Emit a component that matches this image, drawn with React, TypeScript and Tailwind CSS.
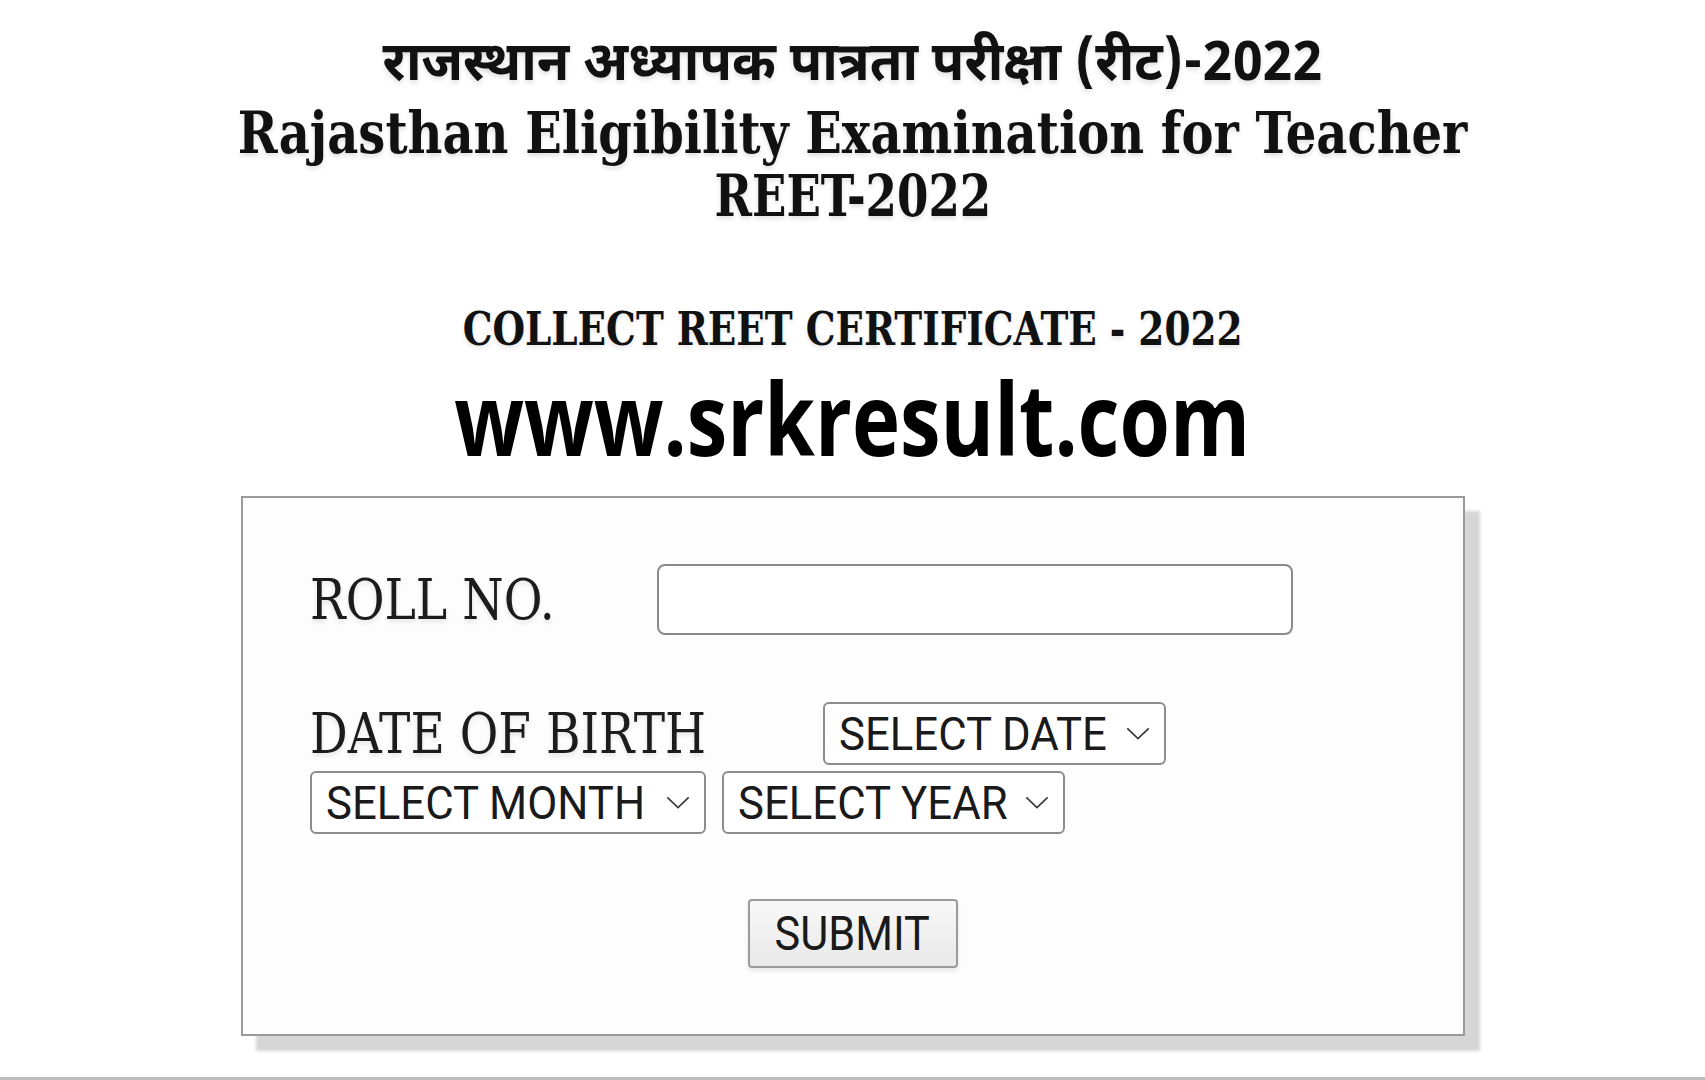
const serif = "font-['DejaVu_Serif','Liberation_Serif',serif]"
const sans = "font-['Roboto','Liberation_Sans',sans-serif]"

function Chevron({ className }: { className?: string }) {
  return (
    <svg viewBox="0 0 26 14" className={className} fill="none">
      <polyline points="1.5,1.5 13,12.5 24.5,1.5" stroke="#3a3a3a" strokeWidth="1.8" />
    </svg>
  )
}

function FakeSelect({ label, width }: { label: string; width: string }) {
  return (
    <div
      className={`${width} flex h-[63px] items-center justify-between rounded-[6px] border-2 border-[#8c8c8c] bg-white pr-[13px] pl-[14px]`}
    >
      <span className={`${sans} inline-block origin-left scale-x-[0.95] text-[46px] leading-none whitespace-nowrap text-[#1a1a1a]`}>
        {label}
      </span>
      <Chevron className="h-[13px] w-[26px] shrink-0" />
    </div>
  )
}

export default function App() {
  return (
    <div className="flex h-[1080px] flex-col items-center overflow-hidden border-b-[3px] border-[#bdbdbd] bg-white pt-[32px] text-[#111]">
      <h1 className="flex flex-col items-center font-bold [text-shadow:0_3px_5px_rgba(0,0,0,0.12)]">
        <span className="flex h-[70px] items-center justify-center">
          <span className="inline-block origin-center scale-x-[0.98] font-['Noto_Sans_Devanagari','Noto_Serif_Devanagari','Lohit_Devanagari','Noto_Sans',sans-serif] text-[54px] leading-none whitespace-nowrap">
            राजस्थान अध्यापक पात्रता परीक्षा (रीट)-2022
          </span>
        </span>
        <span className={`${serif} inline-block h-[63px] origin-center scale-x-[0.828] text-[58px] leading-[63px] whitespace-nowrap`}>
          Rajasthan Eligibility Examination for Teacher
        </span>
        <span className={`${serif} inline-block h-[63px] origin-center scale-x-[0.778] text-[58px] leading-[63px] whitespace-nowrap`}>
          REET-2022
        </span>
      </h1>

      <h2
        className={`${serif} mt-[77px] inline-block h-[48px] origin-center scale-x-[0.813] text-[46px] leading-[48px] font-bold whitespace-nowrap [text-shadow:0_3px_5px_rgba(0,0,0,0.1)]`}
      >
        COLLECT REET CERTIFICATE - 2022
      </h2>

      <div className="mt-[4px] inline-block h-[120px] origin-center scale-x-[0.815] font-['Open_Sans',sans-serif] text-[100px] leading-[120px] font-bold whitespace-nowrap text-black">
        www.srkresult.com
      </div>

      <form className="mt-[19px] w-[1224px] border-2 border-[#9a9a9a] bg-[#fdfdfd] pt-[66px] pr-[60px] pb-[66px] pl-[67px] shadow-[15px_15px_3px_#d6d6d6]">
        <div className="flex h-[71px] items-center">
          <label className={`${serif} w-[347px] text-[56px] leading-none text-[#1c1c1c] [text-shadow:0_3px_5px_rgba(0,0,0,0.1)]`}>
            <span className="inline-block origin-left scale-x-[0.845] whitespace-nowrap">ROLL NO.</span>
          </label>
          <input
            type="text"
            className="h-[71px] w-[636px] rounded-[8px] border-2 border-[#8a8a8a] bg-white outline-none"
          />
        </div>

        <div className="mt-[67px] flex h-[63px] items-center">
          <label className={`${serif} w-[513px] text-[56px] leading-none text-[#1c1c1c] [text-shadow:0_3px_5px_rgba(0,0,0,0.1)]`}>
            <span className="inline-block origin-left scale-x-[0.84] whitespace-nowrap">DATE OF BIRTH</span>
          </label>
          <FakeSelect label="SELECT DATE" width="w-[343px]" />
        </div>

        <div className="mt-[6px] flex gap-[16px]">
          <FakeSelect label="SELECT MONTH" width="w-[396px]" />
          <FakeSelect label="SELECT YEAR" width="w-[343px]" />
        </div>

        <div className="mt-[65px] flex justify-center pr-[7px]">
          <button
            type="button"
            className="flex h-[69px] w-[210px] items-center justify-center rounded-[4px] border-2 border-[#9a9a9a] bg-gradient-to-b from-[#f8f8f8] to-[#e9e9e9] shadow-[0_3px_4px_rgba(0,0,0,0.08)]"
          >
            <span className={`${sans} inline-block origin-center scale-x-[0.9] text-[48px] leading-none text-[#1a1a1a]`}>
              SUBMIT
            </span>
          </button>
        </div>
      </form>
    </div>
  )
}
